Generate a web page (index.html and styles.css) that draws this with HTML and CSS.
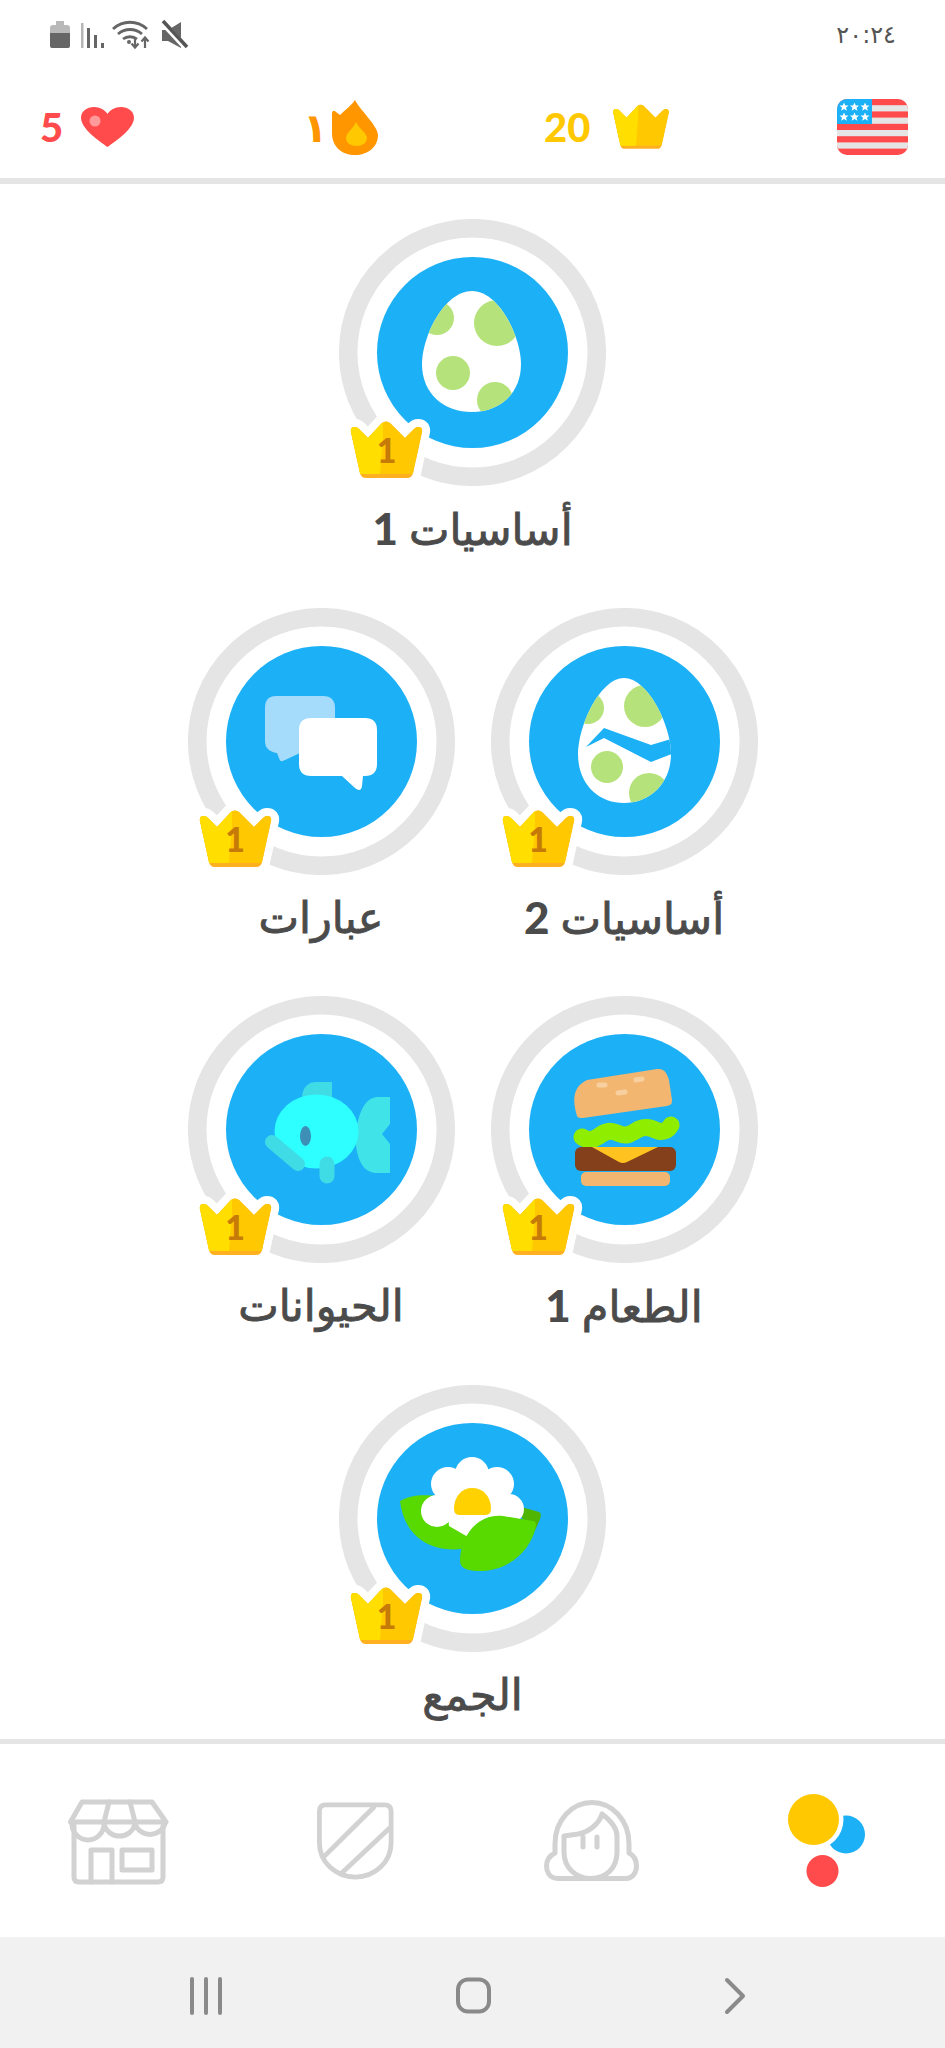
FILE: index.html
```html
<!DOCTYPE html>
<html lang="ar" dir="rtl">
<head>
    <meta charset="UTF-8">
    <meta name="viewport" content="width=device-width, initial-scale=1.0">
    <title>Duolingo</title>
    <link rel="stylesheet" href="styles.css">
</head>
<body>
    <svg class="sprite" width="0" height="0">
        <defs>
            <path id="crown-shape" d="M2 11 Q1 6 6 6 Q8 6 10 8 L19 17 L33 2 Q37 -1 41 2 L56 17 L65 8 Q67 6 69 6 Q74 6 73 11 L64 52 Q63 57 58 57 L17 57 Q12 57 11 52 Z"/>
            <path id="egg-shape" d="M133 72 C160 72 182 118 182 145 C182 175 160 193 133 193 C105 193 83 175 83 145 C83 118 105 72 133 72 Z"/>
            <path id="egg-narrow" d="M133 70 C157 70 180 118 180 146 C180 176 158 195 133 195 C107 195 87 176 87 146 C87 118 109 70 133 70 Z"/>
            <clipPath id="egg-clip"><use href="#egg-shape"/></clipPath>
            <clipPath id="egg-narrow-clip"><use href="#egg-narrow"/></clipPath>
            <clipPath id="crown-clip"><use href="#crown-shape"/></clipPath>
            <clipPath id="flag-clip"><rect width="71" height="56" rx="10"/></clipPath>
            <symbol id="crown" viewBox="-1 -1 77 60">
                <use href="#crown-shape" fill="#ffb020"/>
                <g clip-path="url(#crown-clip)">
                    <rect x="0" y="0" width="75" height="53" fill="#ffc800"/>
                    <path d="M0 0 H34 V16 L31 53 H0 Z" fill="#ffde00"/>
                </g>
            </symbol>
            <symbol id="ring" viewBox="0 0 267 267">
                <circle cx="133.5" cy="133.5" r="124.3" class="ring-track"/>
                <circle cx="133.5" cy="133.5" r="95.5" class="ring-fill"/>
            </symbol>
            <polygon id="star" points="0,-4.6 1.3,-1.5 4.5,-1.4 2,0.7 2.9,3.8 0,2 -2.9,3.8 -2,0.7 -4.5,-1.4 -1.3,-1.5"/>
        </defs>
    </svg>

    <div class="status-bar">
        <span class="clock">٢٠:٢٤</span>
        <div class="status-icons">
            <svg width="138" height="28" viewBox="0 0 138 28">
                <path d="M0 7 Q0 4 3 4 H6 V0 H14 V4 H17 Q20 4 20 7 V12 H0 Z" fill="#b9b9b9"/>
                <path d="M0 12 H20 V25 Q20 27 18 27 H2 Q0 27 0 25 Z" fill="#666"/>
                <rect x="31" y="2" width="2.5" height="25" fill="#b5b5b5"/>
                <rect x="37" y="7" width="3" height="20" fill="#666"/>
                <rect x="44" y="14" width="3" height="13" fill="#666"/>
                <rect x="51" y="22" width="3" height="5" fill="#666"/>
                <g fill="none" stroke="#666" stroke-width="2.8">
                    <path d="M63 8 C73 -1 87 -1 97 8"/>
                    <path d="M68 13 C75 7 85 7 92 13"/>
                    <path d="M73 18 C77 15 83 15 87 18"/>
                    <path d="M85 17 V26 M81.5 22.5 L85 26.5 L88.500 22.500" stroke-width="2.2"/>
                    <path d="M95 27 V17 M91.500 20.500 L95 16.500 L98.500 20.500" stroke-width="2.2"/>
                </g>
                <circle cx="79" cy="21" r="2" fill="#666"/>
                <path d="M112 9 H118 L131 1 V27 L118 20 H112 Z" fill="#666"/>
                <path d="M112 1 L137 28" stroke="#fff" stroke-width="6"/>
                <path d="M113 0 L137 26" stroke="#555" stroke-width="3.500"/>
            </svg>
        </div>
    </div>

    <div class="top-bar">
        <svg class="flag" width="71" height="56" viewBox="0 0 71 56">
            <g clip-path="url(#flag-clip)">
                <rect width="71" height="56" fill="#ff4b4b"/>
                <rect y="6.200" width="71" height="6.200" fill="#e5e5e5"/>
                <rect y="18.600" width="71" height="6.200" fill="#e5e5e5"/>
                <rect y="31" width="71" height="6.200" fill="#e5e5e5"/>
                <rect y="43.400" width="71" height="6.200" fill="#e5e5e5"/>
                <rect width="35" height="25" fill="#1cb0f6"/>
                <g fill="#fff">
                    <use href="#star" x="7" y="8"/>
                    <use href="#star" x="17.500" y="8"/>
                    <use href="#star" x="28" y="8"/>
                    <use href="#star" x="7" y="18"/>
                    <use href="#star" x="17.500" y="18"/>
                    <use href="#star" x="28" y="18"/>
                </g>
            </g>
        </svg>
        <div class="stat stat-crowns">
            <svg width="60" height="48"><use href="#crown"/></svg>
            <span>20</span>
        </div>
        <div class="stat stat-streak">
            <svg width="46" height="55" viewBox="0 0 46 55">
                <path d="M23 0 C28 10 46 26 46 35 C46 47 36 55 23 55 C10 55 0 47 0 33 V13 Q1 9 4 12 L8 15 C12 11 19 6 23 0 Z" fill="#ff9600"/>
                <path d="M24 22 C27 29 35 33 35 38 C35 43 30 46 25 46 C19 46 14 43 14 38 C14 33 21 29 24 22 Z" fill="#ffc800"/>
            </svg>
            <span>١</span>
        </div>
        <div class="stat stat-hearts">
            <svg width="53" height="40" viewBox="0 0 53 40">
                <path d="M26.500 40 C24 38 0 23 0 11 C0 4 6 0 13 0 C19 0 24 3 26.500 7 C29 3 34 0 40 0 C47 0 53 4 53 11 C53 23 29 38 26.500 40 Z" fill="#ff4b4b"/>
                <circle cx="14" cy="14" r="5.500" fill="#ff9a9a"/>
            </svg>
            <span>5</span>
        </div>
    </div>

    <main class="tree">
        <div class="tree-row">
            <div class="skill">
                <div class="skill-icon">
                    <svg width="267" height="267" viewBox="0 0 267 267">
                        <use href="#ring"/>
                        <use href="#egg-shape" fill="#fff"/>
                        <g clip-path="url(#egg-clip)" fill="#b5e27a">
                            <circle cx="98" cy="99" r="17"/>
                            <circle cx="158" cy="104" r="23"/>
                            <circle cx="114" cy="154" r="17"/>
                            <circle cx="156" cy="181" r="18"/>
                        </g>
                    </svg>
                    <div class="crown-badge">
                        <svg width="77" height="60" class="crown-svg"><use href="#crown-shape" class="crown-halo" transform="translate(1 1)"/><use href="#crown"/></svg>
                        <span class="crown-level">1</span>
                    </div>
                </div>
                <div class="skill-name">أساسيات <span class="skill-num">1</span></div>
            </div>
        </div>

        <div class="tree-row">
            <div class="skill">
                <div class="skill-icon">
                    <svg width="267" height="267" viewBox="0 0 267 267">
                        <use href="#ring"/>
                        <use href="#egg-narrow" fill="#fff"/>
                        <g clip-path="url(#egg-narrow-clip)">
                            <g fill="#b5e27a">
                                <circle cx="97" cy="100" r="16"/>
                                <circle cx="154" cy="98" r="21"/>
                                <circle cx="116" cy="159" r="16"/>
                                <circle cx="158" cy="185" r="20"/>
                            </g>
                            <path d="M95 139 L113 120 L160 137 L183 130 L183 145 L160 154 L113 130 Z" fill="#1cb0f6"/>
                        </g>
                    </svg>
                    <div class="crown-badge">
                        <svg width="77" height="60" class="crown-svg"><use href="#crown-shape" class="crown-halo" transform="translate(1 1)"/><use href="#crown"/></svg>
                        <span class="crown-level">1</span>
                    </div>
                </div>
                <div class="skill-name">أساسيات <span class="skill-num">2</span></div>
            </div>
            <div class="skill">
                <div class="skill-icon">
                    <svg width="267" height="267" viewBox="0 0 267 267">
                        <use href="#ring"/>
                        <path d="M88 88 H135 Q147 88 147 100 V133 Q147 145 135 145 H112 L97 152 Q92 155 91 150 L89 145 Q77 143 77 133 V100 Q77 88 88 88 Z" fill="#a5dcfb"/>
                        <path d="M123 110 H177 Q189 110 189 122 V156 Q189 168 177 168 H175 L174 178 Q173 185 167 180 L154 168 H123 Q111 168 111 156 V122 Q111 110 123 110 Z" fill="#fff"/>
                    </svg>
                    <div class="crown-badge">
                        <svg width="77" height="60" class="crown-svg"><use href="#crown-shape" class="crown-halo" transform="translate(1 1)"/><use href="#crown"/></svg>
                        <span class="crown-level">1</span>
                    </div>
                </div>
                <div class="skill-name">عبارات</div>
            </div>
        </div>

        <div class="tree-row">
            <div class="skill">
                <div class="skill-icon">
                    <svg width="267" height="267" viewBox="0 0 267 267">
                        <use href="#ring"/>
                        <path d="M86 120 C80 100 84 90 96 84 L166 73 C174 72 176 78 178 84 L181 104 C181 108 180 109 176 110 L92 122 C89 122 87 122 86 120 Z" fill="#f2b670"/>
                        <g stroke="#f8d0a0" stroke-width="5" stroke-linecap="round">
                            <path d="M108 89 H114"/>
                            <path d="M145 84 L151 83"/>
                            <path d="M127 97 L134 96"/>
                        </g>
                        <path d="M91 141 C99 146 104 143 111 138 C118 134 122 135 129 138 C136 141 141 137 148 133 C155 130 160 132 167 135 C174 137 178 133 180 129" fill="none" stroke="#8fee00" stroke-width="17" stroke-linecap="round"/>
                        <rect x="84" y="151" width="101" height="24" rx="6" fill="#84401a"/>
                        <path d="M101 151 H167 L136 166 Q132 168 128 166 Z" fill="#ffc21f"/>
                        <rect x="90" y="176" width="89" height="14" rx="5" fill="#f2b670"/>
                    </svg>
                    <div class="crown-badge">
                        <svg width="77" height="60" class="crown-svg"><use href="#crown-shape" class="crown-halo" transform="translate(1 1)"/><use href="#crown"/></svg>
                        <span class="crown-level">1</span>
                    </div>
                </div>
                <div class="skill-name">الطعام <span class="skill-num">1</span></div>
            </div>
            <div class="skill">
                <div class="skill-icon">
                    <svg width="267" height="267" viewBox="0 0 267 267">
                        <use href="#ring"/>
                        <path d="M114 102 C114 92 120 86 128 86 H144 V104 Z" fill="#40dce6"/>
                        <path d="M168 135 C171 115 178 101 190 101 H202 V128 L194 138 L202 148 V177 H190 C178 177 171 170 168 150 Z" fill="#40e4e8"/>
                        <ellipse cx="128.500" cy="135.500" rx="42" ry="37" fill="#2effff"/>
                        <path d="M84 146 L110 168" stroke="#40dce6" stroke-width="14" stroke-linecap="round"/>
                        <path d="M139 168 V180" stroke="#40dce6" stroke-width="15" stroke-linecap="round"/>
                        <ellipse cx="117.500" cy="140" rx="5.500" ry="10" fill="#3d8fb5"/>
                    </svg>
                    <div class="crown-badge">
                        <svg width="77" height="60" class="crown-svg"><use href="#crown-shape" class="crown-halo" transform="translate(1 1)"/><use href="#crown"/></svg>
                        <span class="crown-level">1</span>
                    </div>
                </div>
                <div class="skill-name">الحيوانات</div>
            </div>
        </div>

        <div class="tree-row">
            <div class="skill">
                <div class="skill-icon">
                    <svg width="267" height="267" viewBox="0 0 267 267">
                        <use href="#ring"/>
                        <path d="M61 116 C75 108 95 108 130 118 L130 163 C90 170 65 150 61 116 Z" fill="#58d900"/>
                        <path d="M175 120 L200 127 Q203 128 201 134 L194 150 Z" fill="#4fb500"/>
                        <g fill="#fff">
                            <circle cx="133" cy="89" r="17"/>
                            <circle cx="109" cy="99" r="17"/>
                            <circle cx="158" cy="99" r="17"/>
                            <circle cx="98" cy="126" r="16"/>
                            <circle cx="170" cy="124" r="15"/>
                            <path d="M105 90 H165 V137 L129 152 L110 141 Z"/>
                        </g>
                        <path d="M194 136 Q197 136 197 140 C193 165 170 186 141 186 C130 186 121 184 121 176 C121 150 140 128 164 131 Z" fill="#58d900"/>
                        <path d="M115 124 C115 111 123 103 133 103 C144 103 152 111 152 124 Q152 130 146 130 H121 Q115 130 115 124 Z" fill="#ffd100"/>
                    </svg>
                    <div class="crown-badge">
                        <svg width="77" height="60" class="crown-svg"><use href="#crown-shape" class="crown-halo" transform="translate(1 1)"/><use href="#crown"/></svg>
                        <span class="crown-level">1</span>
                    </div>
                </div>
                <div class="skill-name">الجمع</div>
            </div>
        </div>
    </main>

    <nav class="tab-bar">
        <svg width="77" height="93" viewBox="0 0 77 93">
            <circle cx="58" cy="40.500" r="19" fill="#1cb0f6"/>
            <circle cx="25.500" cy="25.500" r="30" fill="#fff"/>
            <circle cx="25.500" cy="25.500" r="25.500" fill="#ffc800"/>
            <circle cx="34.500" cy="77" r="16" fill="#ff4b4b"/>
        </svg>
        <svg width="95" height="81" viewBox="0 0 95 81" class="tab-line">
            <path d="M14 78.500 C5 78.500 2.500 71 2.500 66 C2.500 59 7 55 11 53 V44 C11 20 28 2.500 48 2.500 C68 2.500 85 20 85 44 V53 C89 55 92.500 59 92.500 66 C92.500 72 89 78.500 82 78.500 Z"/>
            <path d="M20 36 V52 C20 68 32 78.500 47 78.500 C62 78.500 73 68 73 52 V36 C73 28 66 20 58 14 C55 24 45 32 34 34 Z"/>
            <path d="M39 37 V47 M53 37 V47"/>
        </svg>
        <svg width="77" height="78" viewBox="0 0 80 80" class="tab-line">
            <path d="M2.500 9 Q2.500 2.500 9 2.500 H70 Q77 2.500 77 9 V42 A37.250 35.500 0 0 1 2.500 42 Z"/>
            <path d="M59 5 L7.500 56"/>
            <path d="M75 27 L26 73"/>
        </svg>
        <svg width="100" height="86" viewBox="0 0 100 86" class="tab-line">
            <path d="M14 4 H84 L98 24 H2.500 Z"/>
            <path d="M41 4 L36 24 M62 4 L67 24"/>
            <path d="M4 26 A16 16 0 0 0 36 26 A16 16 0 0 0 67 26 A16 16 0 0 0 97 26"/>
            <path d="M6 28 V79 Q6 84 11 84 H90 Q95 84 95 79 V28"/>
            <path d="M23 84 V52 H44 V84"/>
            <rect x="54" y="52" width="30" height="20"/>
        </svg>
    </nav>

    <div class="system-nav">
        <svg width="21" height="36" viewBox="0 0 21 36" class="sys-icon">
            <path d="M2 2 L18 18 L2 34"/>
        </svg>
        <svg width="37" height="37" viewBox="0 0 37 37" class="sys-icon">
            <rect x="3" y="2.500" width="31" height="32" rx="10"/>
        </svg>
        <svg width="32" height="36" viewBox="0 0 32 36" class="sys-icon">
            <path d="M2 1 V35 M16 1 V35 M30 1 V35"/>
        </svg>
    </div>
</body>
</html>
```

FILE: styles.css
```css
* {
    box-sizing: border-box;
}

html, body {
    margin: 0;
    padding: 0;
}

body {
    display: flex;
    flex-direction: column;
    width: 945px;
    height: 2048px;
    overflow: hidden;
    background: #fff;
    font-family: 'Lato', 'DejaVu Sans', sans-serif;
    color: #4b4b4b;
}

svg {
    display: block;
    overflow: visible;
}

.sprite {
    position: absolute;
}

.status-bar {
    flex: none;
    display: flex;
    justify-content: space-between;
    align-items: center;
    height: 76px;
    padding: 0 49px 6px 50px;
}

.clock {
    font-family: 'DejaVu Sans', sans-serif;
    font-size: 24px;
    color: #555;
}

.top-bar {
    flex: none;
    display: flex;
    justify-content: space-between;
    align-items: center;
    height: 108px;
    padding: 0 37px 0 40px;
    border-bottom: 6px solid #e5e5e5;
}

.stat {
    display: flex;
    justify-content: space-between;
    align-items: center;
    font-size: 40px;
    line-height: 48px;
    font-weight: 900;
}

.stat-hearts {
    width: 94px;
    color: #ff4b4b;
}

.stat-streak {
    width: 75px;
    margin-left: 3px;
    color: #ff9600;
}

.stat-crowns {
    width: 127px;
    color: #ffc800;
}

.tree {
    flex: 1;
    min-height: 0;
    display: flex;
    flex-direction: column;
    align-items: center;
    padding-top: 35px;
    overflow: hidden;
}

.tree-row {
    flex: none;
    display: flex;
    gap: 36px;
    height: 388.500px;
}

.skill {
    width: 267px;
}

.skill-icon {
    position: relative;
    width: 267px;
    height: 267px;
}

.ring-track {
    fill: none;
    stroke: #e5e5e5;
    stroke-width: 18.500px;
}

.ring-fill {
    fill: #1cb0f6;
}

.crown-badge {
    position: absolute;
    left: 9px;
    top: 201px;
    width: 77px;
    height: 60px;
}

.crown-halo {
    fill: #fff;
    stroke: #fff;
    stroke-width: 16px;
    stroke-linejoin: round;
}

.crown-level {
    position: absolute;
    left: 0;
    right: 0;
    top: 8px;
    text-align: center;
    font-size: 34px;
    line-height: 44px;
    font-weight: 900;
    color: #c67a08;
}

.skill-name {
    width: 340px;
    margin: 14px -36.500px 0;
    text-align: center;
    font-size: 43px;
    line-height: 56px;
    font-weight: 400;
    -webkit-text-stroke: 0.9px #4b4b4b;
    color: #4b4b4b;
    white-space: nowrap;
}

.skill-num {
    font-size: 44px;
    font-weight: 900;
    -webkit-text-stroke: 0;
}

.tab-bar {
    flex: none;
    display: flex;
    justify-content: space-between;
    align-items: center;
    height: 198px;
    padding: 0 80px 0 68px;
    border-top: 5px solid #e5e5e5;
}

.tab-line {
    fill: none;
    stroke: #d2d2d2;
    stroke-width: 5px;
    stroke-linejoin: round;
    stroke-linecap: round;
}

.system-nav {
    flex: none;
    display: flex;
    justify-content: space-between;
    align-items: center;
    height: 111px;
    padding: 6px 199px 0 190px;
    background: #f1f1f2;
}

.sys-icon {
    fill: none;
    stroke: #8a8a8a;
    stroke-width: 4px;
    stroke-linecap: round;
    stroke-linejoin: round;
}
```
